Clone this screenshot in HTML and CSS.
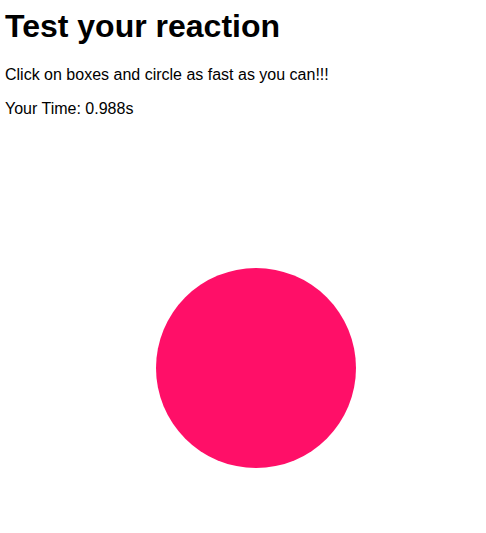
FILE: index.html
```html
<!DOCTYPE html>
<html>
<head>
<meta charset="utf-8">
<title>Test your reaction</title>
<link rel="stylesheet" href="styles.css">
</head>
<body>
<h1 class="title">Test your reaction</h1>
<p class="text">Click on boxes and circle as fast as you can!!!</p>
<p class="text">Your Time: <span class="time">0.988s</span></p>
<div class="shape"></div>
</body>
</html>
```

FILE: styles.css
```css
html, body {
  margin: 0;
  padding: 0;
  background: #ffffff;
}
body {
  padding: 8px 5px;
  font-family: "Liberation Sans", Arial, sans-serif;
  color: #000;
}
.title {
  font-size: 32px;
  font-weight: bold;
  margin: 0 0 21.44px 0;
}
.text {
  font-size: 16px;
  margin: 16px 0;
}
.shape {
  width: 200px;
  height: 200px;
  border-radius: 50%;
  background: #ff0f68;
  margin: 150px 0 0 151px;
}
```
